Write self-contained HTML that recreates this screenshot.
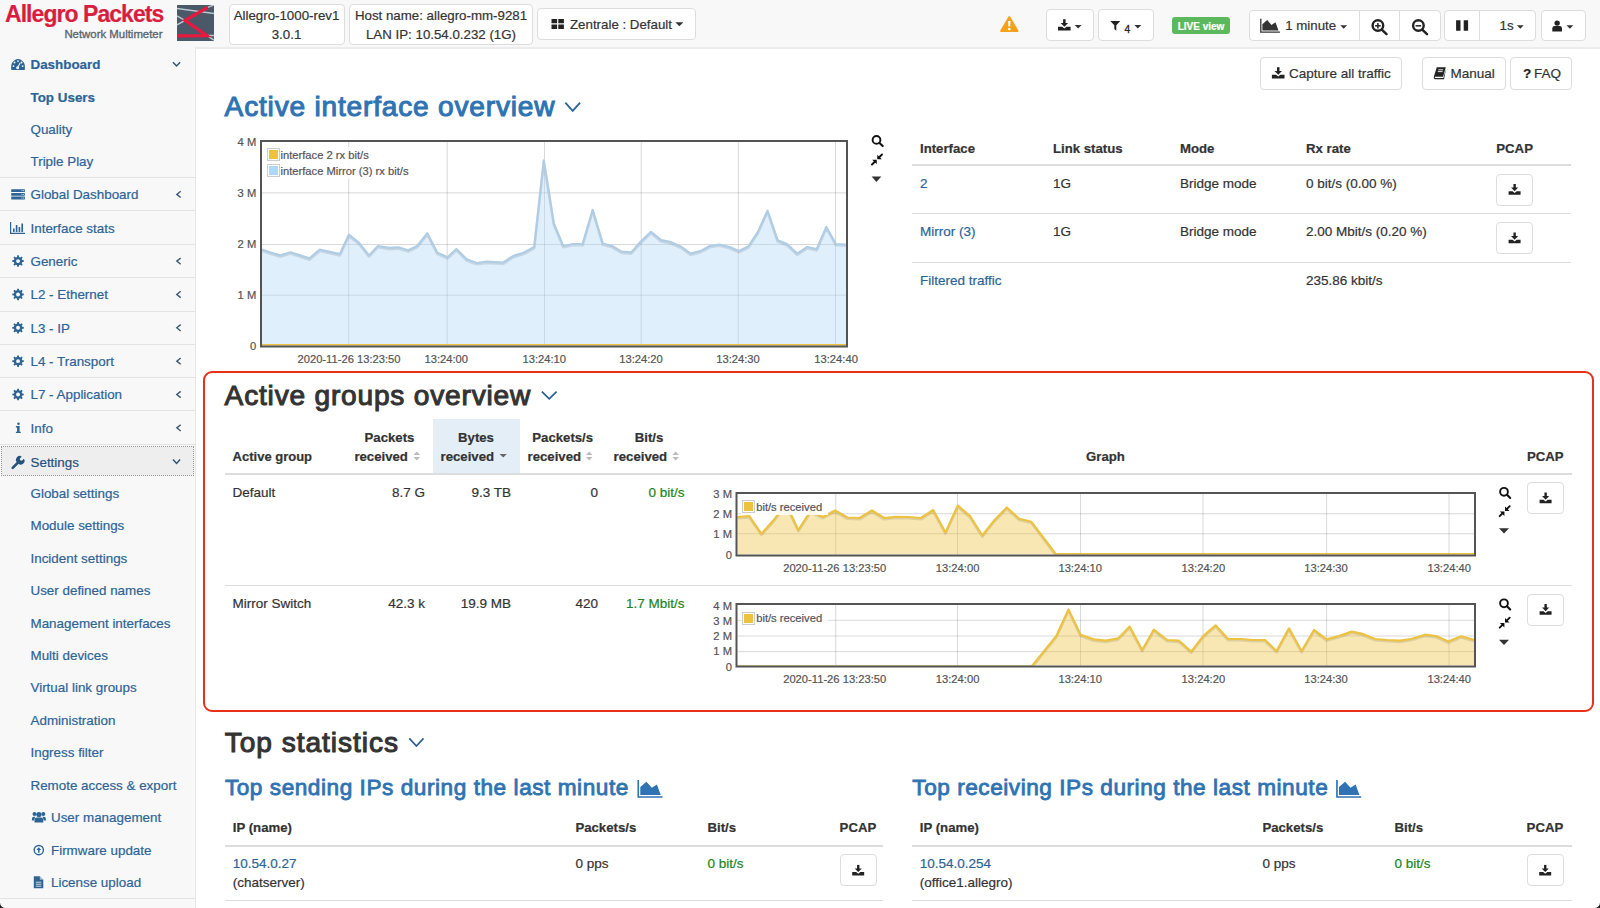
<!DOCTYPE html>
<html><head><meta charset="utf-8"><style>
html,body{margin:0;padding:0;}
body{width:1600px;height:908px;overflow:hidden;position:relative;font-family:"Liberation Sans",sans-serif;color:#333;background:#fff;}
.t{position:absolute;white-space:nowrap;-webkit-text-stroke:0.2px currentColor;}
</style></head><body>
<div style="position:absolute;left:0px;top:0px;width:1600px;height:908px;background:#f8f8f8"></div>
<div style="position:absolute;left:196px;top:47px;width:1404px;height:861px;background:#fff;border-top:2px solid #ececec;box-sizing:border-box"></div>
<div class="t" style="top:3.00px;font-size:23px;line-height:23px;font-weight:bold;color:#d81e3f;left:5.00px;letter-spacing:-0.95px;">Allegro Packets</div>
<div class="t" style="top:29.20px;font-size:11.4px;line-height:11.4px;color:#5d6670;left:64.40px;-webkit-text-stroke:0.35px #5d6670;">Network Multimeter</div>
<svg style="position:absolute;left:177.4px;top:4.8px" width="37" height="36.7" viewBox="0 0 37 36.7"><rect width="37" height="36.7" fill="#4a5868"/><path d="M0 3.4 L36.9 8.6 M30.7 2.4 L36.9 0 M0 10.9 L8 15.4 L0 19.9 M29.8 30.4 L36.9 30.4 M29.8 30.4 L36.9 35.1" stroke="#b9c5cd" stroke-width="1.5" fill="none"/><path d="M30.7 2.4 L8 15.4 L29.8 30.6 L0 30.8" stroke="#e8183f" stroke-width="3.2" fill="none" stroke-linejoin="miter"/></svg>
<div style="position:absolute;left:229px;top:3.5px;width:116px;height:41px;background:#fff;border:1px solid #ddd;border-radius:4px;box-sizing:border-box;"></div>
<div class="t" style="top:9.00px;font-size:13.3px;line-height:13.3px;left:-113.50px;width:800px;text-align:center;">Allegro-1000-rev1</div>
<div class="t" style="top:27.50px;font-size:13.3px;line-height:13.3px;left:-113.50px;width:800px;text-align:center;">3.0.1</div>
<div style="position:absolute;left:349px;top:3.5px;width:184px;height:41px;background:#fff;border:1px solid #ddd;border-radius:4px;box-sizing:border-box;"></div>
<div class="t" style="top:9.00px;font-size:13.3px;line-height:13.3px;left:41.00px;width:800px;text-align:center;">Host name: allegro-mm-9281</div>
<div class="t" style="top:27.50px;font-size:13.3px;line-height:13.3px;left:41.00px;width:800px;text-align:center;">LAN IP: 10.54.0.232 (1G)</div>
<div style="position:absolute;left:537px;top:8px;width:159px;height:32px;background:#fff;border:1px solid #ddd;border-radius:4px;box-sizing:border-box;"></div>
<div class="t" style="top:17.90px;font-size:13.3px;line-height:13.3px;left:570.00px;">Zentrale : Default</div>
<div style="position:absolute;left:1046px;top:9px;width:48px;height:32px;background:#fff;border:1px solid #ddd;border-radius:4px;box-sizing:border-box;"></div>
<div style="position:absolute;left:1098px;top:9px;width:56px;height:32px;background:#fff;border:1px solid #ddd;border-radius:4px;box-sizing:border-box;"></div>
<div style="position:absolute;left:1172px;top:17px;width:58px;height:17px;background:#5cb85c;border-radius:3px"></div>
<div class="t" style="top:21.50px;font-size:10px;line-height:10px;font-weight:bold;color:#fff;left:801.00px;width:800px;text-align:center;">LIVE view</div>
<div style="position:absolute;left:1248.5px;top:9.5px;width:192px;height:31px;background:#fff;border:1px solid #ddd;border-radius:4px;box-sizing:border-box;"></div>
<div style="position:absolute;left:1358.5px;top:9.5px;width:1px;height:31px;background:#ddd"></div>
<div style="position:absolute;left:1399px;top:9.5px;width:1px;height:31px;background:#ddd"></div>
<div class="t" style="top:19.40px;font-size:13.3px;line-height:13.3px;left:1285.20px;">1 minute</div>
<div style="position:absolute;left:1444px;top:9.5px;width:92px;height:31px;background:#fff;border:1px solid #ddd;border-radius:4px;box-sizing:border-box;"></div>
<div style="position:absolute;left:1479px;top:9.5px;width:1px;height:31px;background:#ddd"></div>
<div class="t" style="top:19.20px;font-size:13.3px;line-height:13.3px;left:1499.50px;">1s</div>
<div style="position:absolute;left:1540.5px;top:9.5px;width:45px;height:31px;background:#fff;border:1px solid #ddd;border-radius:4px;box-sizing:border-box;"></div>
<div style="position:absolute;left:1260px;top:57px;width:142px;height:33px;background:#fff;border:1px solid #ddd;border-radius:4px;box-sizing:border-box;"></div>
<div class="t" style="top:67.40px;font-size:13.5px;line-height:13.5px;left:1289.00px;">Capture all traffic</div>
<div style="position:absolute;left:1421.5px;top:57px;width:84px;height:33px;background:#fff;border:1px solid #ddd;border-radius:4px;box-sizing:border-box;"></div>
<div class="t" style="top:67.40px;font-size:13.5px;line-height:13.5px;left:1450.50px;">Manual</div>
<div style="position:absolute;left:1509.5px;top:57px;width:62px;height:33px;background:#fff;border:1px solid #ddd;border-radius:4px;box-sizing:border-box;"></div>
<div class="t" style="top:67.40px;font-size:13.5px;line-height:13.5px;left:1534.00px;">FAQ</div>
<div style="position:absolute;left:195px;top:47px;width:1px;height:861px;background:#e7e7e7"></div>
<div class="t" style="top:58.00px;font-size:13.4px;line-height:13.4px;font-weight:bold;color:#2c6496;left:30.50px;">Dashboard</div>
<div class="t" style="top:90.70px;font-size:13.4px;line-height:13.4px;font-weight:bold;color:#2c6496;left:30.50px;">Top Users</div>
<div class="t" style="top:123.00px;font-size:13.4px;line-height:13.4px;color:#2c6496;left:30.50px;">Quality</div>
<div class="t" style="top:155.40px;font-size:13.4px;line-height:13.4px;color:#2c6496;left:30.50px;">Triple Play</div>
<div style="position:absolute;left:0px;top:177px;width:195px;height:1px;background:#e3e3e3"></div>
<div class="t" style="top:188.20px;font-size:13.4px;line-height:13.4px;color:#2c6496;left:30.50px;">Global Dashboard</div>
<div style="position:absolute;left:0px;top:210px;width:195px;height:1px;background:#e3e3e3"></div>
<div class="t" style="top:221.55px;font-size:13.4px;line-height:13.4px;color:#2c6496;left:30.50px;">Interface stats</div>
<div style="position:absolute;left:0px;top:244px;width:195px;height:1px;background:#e3e3e3"></div>
<div class="t" style="top:254.90px;font-size:13.4px;line-height:13.4px;color:#2c6496;left:30.50px;">Generic</div>
<div style="position:absolute;left:0px;top:277px;width:195px;height:1px;background:#e3e3e3"></div>
<div class="t" style="top:288.25px;font-size:13.4px;line-height:13.4px;color:#2c6496;left:30.50px;">L2 - Ethernet</div>
<div style="position:absolute;left:0px;top:311px;width:195px;height:1px;background:#e3e3e3"></div>
<div class="t" style="top:321.60px;font-size:13.4px;line-height:13.4px;color:#2c6496;left:30.50px;">L3 - IP</div>
<div style="position:absolute;left:0px;top:344px;width:195px;height:1px;background:#e3e3e3"></div>
<div class="t" style="top:354.95px;font-size:13.4px;line-height:13.4px;color:#2c6496;left:30.50px;">L4 - Transport</div>
<div style="position:absolute;left:0px;top:377px;width:195px;height:1px;background:#e3e3e3"></div>
<div class="t" style="top:388.30px;font-size:13.4px;line-height:13.4px;color:#2c6496;left:30.50px;">L7 - Application</div>
<div style="position:absolute;left:0px;top:410px;width:195px;height:1px;background:#e3e3e3"></div>
<div class="t" style="top:421.65px;font-size:13.4px;line-height:13.4px;color:#2c6496;left:30.50px;">Info</div>
<div style="position:absolute;left:0px;top:444px;width:195px;height:1px;background:#e3e3e3"></div>
<div style="position:absolute;left:1px;top:446px;width:193px;height:30px;background:#eeeeee;border:1px dotted #999;box-sizing:border-box"></div>
<div class="t" style="top:455.80px;font-size:13.4px;line-height:13.4px;color:#23527c;left:30.50px;">Settings</div>
<div class="t" style="top:487.00px;font-size:13.4px;line-height:13.4px;color:#2c6496;left:30.50px;">Global settings</div>
<div class="t" style="top:519.40px;font-size:13.4px;line-height:13.4px;color:#2c6496;left:30.50px;">Module settings</div>
<div class="t" style="top:551.80px;font-size:13.4px;line-height:13.4px;color:#2c6496;left:30.50px;">Incident settings</div>
<div class="t" style="top:584.20px;font-size:13.4px;line-height:13.4px;color:#2c6496;left:30.50px;">User defined names</div>
<div class="t" style="top:616.60px;font-size:13.4px;line-height:13.4px;color:#2c6496;left:30.50px;">Management interfaces</div>
<div class="t" style="top:649.00px;font-size:13.4px;line-height:13.4px;color:#2c6496;left:30.50px;">Multi devices</div>
<div class="t" style="top:681.40px;font-size:13.4px;line-height:13.4px;color:#2c6496;left:30.50px;">Virtual link groups</div>
<div class="t" style="top:713.80px;font-size:13.4px;line-height:13.4px;color:#2c6496;left:30.50px;">Administration</div>
<div class="t" style="top:746.20px;font-size:13.4px;line-height:13.4px;color:#2c6496;left:30.50px;">Ingress filter</div>
<div class="t" style="top:778.60px;font-size:13.4px;line-height:13.4px;color:#2c6496;left:30.50px;">Remote access &amp; export</div>
<div class="t" style="top:811.00px;font-size:13.4px;line-height:13.4px;color:#2c6496;left:51.00px;">User management</div>
<div class="t" style="top:843.50px;font-size:13.4px;line-height:13.4px;color:#2c6496;left:51.00px;">Firmware update</div>
<div class="t" style="top:876.00px;font-size:13.4px;line-height:13.4px;color:#2c6496;left:51.00px;">License upload</div>
<div style="position:absolute;left:0px;top:898px;width:195px;height:1px;background:#e3e3e3"></div>
<div class="t" style="top:92.60px;font-size:28.1px;line-height:28.1px;color:#2f73b3;left:224.60px;letter-spacing:0.8px;-webkit-text-stroke:1.05px #2f73b3;">Active interface overview</div>
<div class="t" style="top:141.80px;font-size:13.2px;line-height:13.2px;font-weight:bold;left:920.00px;">Interface</div>
<div class="t" style="top:141.80px;font-size:13.2px;line-height:13.2px;font-weight:bold;left:1053.00px;">Link status</div>
<div class="t" style="top:141.80px;font-size:13.2px;line-height:13.2px;font-weight:bold;left:1180.00px;">Mode</div>
<div class="t" style="top:141.80px;font-size:13.2px;line-height:13.2px;font-weight:bold;left:1306.00px;">Rx rate</div>
<div class="t" style="top:141.80px;font-size:13.2px;line-height:13.2px;font-weight:bold;left:1496.30px;">PCAP</div>
<div style="position:absolute;left:912px;top:164px;width:659px;height:2px;background:#ddd"></div>
<div style="position:absolute;left:912px;top:213px;width:659px;height:1px;background:#ddd"></div>
<div style="position:absolute;left:912px;top:262px;width:659px;height:1px;background:#ddd"></div>
<div class="t" style="top:176.80px;font-size:13.5px;line-height:13.5px;color:#2c6496;left:920.00px;">2</div>
<div class="t" style="top:176.80px;font-size:13.5px;line-height:13.5px;left:1053.00px;">1G</div>
<div class="t" style="top:176.80px;font-size:13.5px;line-height:13.5px;left:1180.00px;">Bridge mode</div>
<div class="t" style="top:176.80px;font-size:13.5px;line-height:13.5px;left:1306.00px;">0 bit/s (0.00 %)</div>
<div style="position:absolute;left:1496px;top:173.5px;width:37px;height:32px;background:#fff;border:1px solid #ddd;border-radius:4px;box-sizing:border-box;"></div>
<div class="t" style="top:225.40px;font-size:13.5px;line-height:13.5px;color:#2c6496;left:920.00px;">Mirror (3)</div>
<div class="t" style="top:225.40px;font-size:13.5px;line-height:13.5px;left:1053.00px;">1G</div>
<div class="t" style="top:225.40px;font-size:13.5px;line-height:13.5px;left:1180.00px;">Bridge mode</div>
<div class="t" style="top:225.40px;font-size:13.5px;line-height:13.5px;left:1306.00px;">2.00 Mbit/s (0.20 %)</div>
<div style="position:absolute;left:1496px;top:222px;width:37px;height:32px;background:#fff;border:1px solid #ddd;border-radius:4px;box-sizing:border-box;"></div>
<div class="t" style="top:274.00px;font-size:13.5px;line-height:13.5px;color:#2c6496;left:920.00px;">Filtered traffic</div>
<div class="t" style="top:274.00px;font-size:13.5px;line-height:13.5px;left:1306.00px;">235.86 kbit/s</div>
<div style="position:absolute;left:202.8px;top:370.7px;width:1391px;height:341px;border:2.4px solid #e8301a;border-radius:9px;box-sizing:border-box"></div>
<div class="t" style="top:381.60px;font-size:28.1px;line-height:28.1px;left:224.60px;letter-spacing:0.8px;-webkit-text-stroke:1.05px #333;">Active groups overview</div>
<div style="position:absolute;left:433px;top:419px;width:86.5px;height:54px;background:#e4eef7"></div>
<div class="t" style="top:450.00px;font-size:13.0px;line-height:13.0px;font-weight:bold;left:232.60px;">Active group</div>
<div class="t" style="top:430.50px;font-size:13.2px;line-height:13.2px;font-weight:bold;left:-10.50px;width:800px;text-align:center;">Packets</div>
<div class="t" style="top:430.50px;font-size:13.2px;line-height:13.2px;font-weight:bold;left:76.00px;width:800px;text-align:center;">Bytes</div>
<div class="t" style="top:430.50px;font-size:13.2px;line-height:13.2px;font-weight:bold;left:162.70px;width:800px;text-align:center;">Packets/s</div>
<div class="t" style="top:430.50px;font-size:13.2px;line-height:13.2px;font-weight:bold;left:249.00px;width:800px;text-align:center;">Bit/s</div>
<div class="t" style="top:450.00px;font-size:13.2px;line-height:13.2px;font-weight:bold;left:354.40px;">received</div>
<div class="t" style="top:450.00px;font-size:13.2px;line-height:13.2px;font-weight:bold;left:440.50px;">received</div>
<div class="t" style="top:450.00px;font-size:13.2px;line-height:13.2px;font-weight:bold;left:527.50px;">received</div>
<div class="t" style="top:450.00px;font-size:13.2px;line-height:13.2px;font-weight:bold;left:613.60px;">received</div>
<div class="t" style="top:449.50px;font-size:13.2px;line-height:13.2px;font-weight:bold;left:705.50px;width:800px;text-align:center;">Graph</div>
<div class="t" style="top:449.50px;font-size:13.2px;line-height:13.2px;font-weight:bold;left:1527.00px;">PCAP</div>
<div style="position:absolute;left:225px;top:472.5px;width:1347px;height:2px;background:#ddd"></div>
<div style="position:absolute;left:225px;top:584.5px;width:1347px;height:1px;background:#ddd"></div>
<div class="t" style="top:486.00px;font-size:13.5px;line-height:13.5px;left:232.60px;">Default</div>
<div class="t" style="top:486.00px;font-size:13.5px;line-height:13.5px;right:1175.00px;">8.7 G</div>
<div class="t" style="top:486.00px;font-size:13.5px;line-height:13.5px;right:1089.00px;">9.3 TB</div>
<div class="t" style="top:486.00px;font-size:13.5px;line-height:13.5px;right:1002.00px;">0</div>
<div class="t" style="top:486.00px;font-size:13.5px;line-height:13.5px;color:#1a8520;right:915.60px;">0 bit/s</div>
<div class="t" style="top:597.00px;font-size:13.5px;line-height:13.5px;left:232.60px;">Mirror Switch</div>
<div class="t" style="top:597.00px;font-size:13.5px;line-height:13.5px;right:1175.00px;">42.3 k</div>
<div class="t" style="top:597.00px;font-size:13.5px;line-height:13.5px;right:1089.00px;">19.9 MB</div>
<div class="t" style="top:597.00px;font-size:13.5px;line-height:13.5px;right:1002.00px;">420</div>
<div class="t" style="top:597.00px;font-size:13.5px;line-height:13.5px;color:#1a8520;right:915.60px;">1.7 Mbit/s</div>
<div style="position:absolute;left:1527px;top:482px;width:37px;height:32px;background:#fff;border:1px solid #ddd;border-radius:4px;box-sizing:border-box;"></div>
<div style="position:absolute;left:1527px;top:593.5px;width:37px;height:32px;background:#fff;border:1px solid #ddd;border-radius:4px;box-sizing:border-box;"></div>
<div class="t" style="top:728.60px;font-size:28.1px;line-height:28.1px;left:224.80px;letter-spacing:0.95px;-webkit-text-stroke:1.05px #333;">Top statistics</div>
<div class="t" style="top:777.30px;font-size:22.6px;line-height:22.6px;color:#2f73b3;left:224.90px;letter-spacing:0.55px;-webkit-text-stroke:0.85px #2f73b3;">Top sending IPs during the last minute</div>
<div class="t" style="top:777.30px;font-size:22.6px;line-height:22.6px;color:#2f73b3;left:912.30px;letter-spacing:0.54px;-webkit-text-stroke:0.85px #2f73b3;">Top receiving IPs during the last minute</div>
<div class="t" style="top:820.60px;font-size:13.2px;line-height:13.2px;font-weight:bold;left:232.80px;">IP (name)</div>
<div class="t" style="top:820.60px;font-size:13.2px;line-height:13.2px;font-weight:bold;left:575.40px;">Packets/s</div>
<div class="t" style="top:820.60px;font-size:13.2px;line-height:13.2px;font-weight:bold;left:707.50px;">Bit/s</div>
<div class="t" style="top:820.60px;font-size:13.2px;line-height:13.2px;font-weight:bold;left:839.60px;">PCAP</div>
<div style="position:absolute;left:225.4px;top:844.6px;width:658.0px;height:2px;background:#ddd"></div>
<div style="position:absolute;left:225.4px;top:899.8px;width:658.0px;height:1px;background:#ddd"></div>
<div class="t" style="top:857.40px;font-size:13.5px;line-height:13.5px;left:575.40px;">0 pps</div>
<div class="t" style="top:857.40px;font-size:13.5px;line-height:13.5px;color:#1a8520;left:707.50px;">0 bit/s</div>
<div style="position:absolute;left:839.6px;top:854.4px;width:37px;height:32px;background:#fff;border:1px solid #ddd;border-radius:4px;box-sizing:border-box;"></div>
<div class="t" style="top:820.60px;font-size:13.2px;line-height:13.2px;font-weight:bold;left:919.80px;">IP (name)</div>
<div class="t" style="top:820.60px;font-size:13.2px;line-height:13.2px;font-weight:bold;left:1262.40px;">Packets/s</div>
<div class="t" style="top:820.60px;font-size:13.2px;line-height:13.2px;font-weight:bold;left:1394.50px;">Bit/s</div>
<div class="t" style="top:820.60px;font-size:13.2px;line-height:13.2px;font-weight:bold;left:1526.60px;">PCAP</div>
<div style="position:absolute;left:912.3px;top:844.6px;width:659.3px;height:2px;background:#ddd"></div>
<div style="position:absolute;left:912.3px;top:899.8px;width:659.3px;height:1px;background:#ddd"></div>
<div class="t" style="top:857.40px;font-size:13.5px;line-height:13.5px;left:1262.40px;">0 pps</div>
<div class="t" style="top:857.40px;font-size:13.5px;line-height:13.5px;color:#1a8520;left:1394.50px;">0 bit/s</div>
<div style="position:absolute;left:1526.6px;top:854.4px;width:37px;height:32px;background:#fff;border:1px solid #ddd;border-radius:4px;box-sizing:border-box;"></div>
<div class="t" style="top:857.40px;font-size:13.5px;line-height:13.5px;color:#2c6496;left:232.80px;">10.54.0.27</div>
<div class="t" style="top:876.20px;font-size:13.5px;line-height:13.5px;left:232.80px;">(chatserver)</div>
<div class="t" style="top:857.40px;font-size:13.5px;line-height:13.5px;color:#2c6496;left:919.80px;">10.54.0.254</div>
<div class="t" style="top:876.20px;font-size:13.5px;line-height:13.5px;left:919.80px;">(office1.allegro)</div>
<svg style="position:absolute;left:0;top:0" width="1600" height="908" viewBox="0 0 1600 908"><defs><clipPath id="c260_140"><rect x="262" y="142" width="584" height="203.5"/></clipPath></defs><path d="M348.7 142V345.5M447.2 142V345.5M544.5 142V345.5M641.2 142V345.5M738.3 142V345.5M835.5 142V345.5M262 192.9H846M262 244.5H846M262 295.2H846" stroke="rgba(84,84,84,0.22)" stroke-width="1" fill="none"/><g clip-path="url(#c260_140)"><polygon points="262.0,345.5 262.0,249.6 270.5,252.5 280.4,255.4 290.5,252.3 300.0,255.4 309.5,258.4 319.7,249.6 329.8,251.9 339.9,254.1 348.8,234.6 358.9,242.7 369.0,255.4 377.9,246.0 389.3,247.8 398.2,247.3 408.3,250.3 417.2,246.0 427.3,233.3 437.4,252.8 447.6,257.2 456.4,249.0 466.6,259.2 476.7,263.0 486.8,261.7 495.0,262.1 503.3,262.5 513.4,255.9 523.6,252.8 534.2,247.0 543.8,160.4 553.9,223.7 563.3,246.0 572.9,244.0 582.6,244.0 592.7,209.8 602.8,243.5 612.2,246.0 621.6,251.6 631.2,252.4 640.8,241.5 651.0,231.9 661.1,240.2 671.2,242.2 680.6,246.5 690.7,253.6 700.9,250.9 709.8,246.0 719.4,244.5 729.5,247.0 738.9,251.1 748.3,246.5 757.9,231.9 767.5,210.6 777.6,240.2 787.0,244.0 797.2,253.6 807.3,247.0 816.7,249.1 826.3,227.0 835.9,244.0 846.0,244.5 846.0,345.5" fill="rgba(175,216,248,0.4)"/><polyline points="262.0,250.9 270.5,253.8 280.4,256.7 290.5,253.6 300.0,256.7 309.5,259.7 319.7,250.9 329.8,253.2 339.9,255.4 348.8,235.9 358.9,244.0 369.0,256.7 377.9,247.3 389.3,249.1 398.2,248.6 408.3,251.6 417.2,247.3 427.3,234.6 437.4,254.1 447.6,258.5 456.4,250.3 466.6,260.5 476.7,264.3 486.8,263.0 495.0,263.4 503.3,263.8 513.4,257.2 523.6,254.1 534.2,248.3 543.8,161.7 553.9,225.0 563.3,247.3 572.9,245.3 582.6,245.3 592.7,211.1 602.8,244.8 612.2,247.3 621.6,252.9 631.2,253.7 640.8,242.8 651.0,233.2 661.1,241.5 671.2,243.5 680.6,247.8 690.7,254.9 700.9,252.2 709.8,247.3 719.4,245.8 729.5,248.3 738.9,252.4 748.3,247.8 757.9,233.2 767.5,211.9 777.6,241.5 787.0,245.3 797.2,254.9 807.3,248.3 816.7,250.4 826.3,228.3 835.9,245.3 846.0,245.8" fill="none" stroke="rgba(0,0,0,0.1)" stroke-width="2.6" stroke-linejoin="round"/><polyline points="262.0,249.6 270.5,252.5 280.4,255.4 290.5,252.3 300.0,255.4 309.5,258.4 319.7,249.6 329.8,251.9 339.9,254.1 348.8,234.6 358.9,242.7 369.0,255.4 377.9,246.0 389.3,247.8 398.2,247.3 408.3,250.3 417.2,246.0 427.3,233.3 437.4,252.8 447.6,257.2 456.4,249.0 466.6,259.2 476.7,263.0 486.8,261.7 495.0,262.1 503.3,262.5 513.4,255.9 523.6,252.8 534.2,247.0 543.8,160.4 553.9,223.7 563.3,246.0 572.9,244.0 582.6,244.0 592.7,209.8 602.8,243.5 612.2,246.0 621.6,251.6 631.2,252.4 640.8,241.5 651.0,231.9 661.1,240.2 671.2,242.2 680.6,246.5 690.7,253.6 700.9,250.9 709.8,246.0 719.4,244.5 729.5,247.0 738.9,251.1 748.3,246.5 757.9,231.9 767.5,210.6 777.6,240.2 787.0,244.0 797.2,253.6 807.3,247.0 816.7,249.1 826.3,227.0 835.9,244.0 846.0,244.5" fill="none" stroke="#b0cde6" stroke-width="2.2" stroke-linejoin="round"/><polyline points="262.0,346.3 846.0,346.3" fill="none" stroke="rgba(0,0,0,0.1)" stroke-width="2.6" stroke-linejoin="round"/><polyline points="262.0,345.0 846.0,345.0" fill="none" stroke="#edc240" stroke-width="2.2" stroke-linejoin="round"/></g><rect x="261" y="141" width="586" height="205.5" fill="none" stroke="#545454" stroke-width="2"/></svg>
<div style="position:absolute;left:265.2px;top:146.7px;width:162.45px;height:32.4px;background:rgba(255,255,255,0.85)"></div>
<div style="position:absolute;left:266.7px;top:148.2px;width:11px;height:11px;border:1px solid #ccc;padding:0"><div style="margin:1px;width:9px;height:9px;background:#edc240"></div></div>
<div class="t" style="top:150.00px;font-size:11.2px;line-height:11.2px;color:#545454;left:280.50px;">interface 2 rx bit/s</div>
<div style="position:absolute;left:266.7px;top:164.4px;width:11px;height:11px;border:1px solid #ccc;padding:0"><div style="margin:1px;width:9px;height:9px;background:#afd8f8"></div></div>
<div class="t" style="top:166.20px;font-size:11.2px;line-height:11.2px;color:#545454;left:280.50px;">interface Mirror (3) rx bit/s</div>
<div class="t" style="top:137.30px;font-size:11.2px;line-height:11.2px;color:#545454;right:1343.80px;">4 M</div>
<div class="t" style="top:187.60px;font-size:11.2px;line-height:11.2px;color:#545454;right:1343.80px;">3 M</div>
<div class="t" style="top:239.20px;font-size:11.2px;line-height:11.2px;color:#545454;right:1343.80px;">2 M</div>
<div class="t" style="top:289.90px;font-size:11.2px;line-height:11.2px;color:#545454;right:1343.80px;">1 M</div>
<div class="t" style="top:340.70px;font-size:11.2px;line-height:11.2px;color:#545454;right:1343.80px;">0</div>
<div class="t" style="top:354.45px;font-size:11.2px;line-height:11.2px;color:#545454;left:-51.00px;width:800px;text-align:center;">2020-11-26 13:23:50</div>
<div class="t" style="top:354.45px;font-size:11.2px;line-height:11.2px;color:#545454;left:46.30px;width:800px;text-align:center;">13:24:00</div>
<div class="t" style="top:354.45px;font-size:11.2px;line-height:11.2px;color:#545454;left:144.30px;width:800px;text-align:center;">13:24:10</div>
<div class="t" style="top:354.45px;font-size:11.2px;line-height:11.2px;color:#545454;left:241.00px;width:800px;text-align:center;">13:24:20</div>
<div class="t" style="top:354.45px;font-size:11.2px;line-height:11.2px;color:#545454;left:338.00px;width:800px;text-align:center;">13:24:30</div>
<div class="t" style="top:354.45px;font-size:11.2px;line-height:11.2px;color:#545454;left:436.10px;width:800px;text-align:center;">13:24:40</div>
<svg style="position:absolute;left:0;top:0" width="1600" height="908" viewBox="0 0 1600 908"><defs><clipPath id="c735_492"><rect x="737.5" y="494" width="736.5" height="60.5"/></clipPath></defs><path d="M835.75 494V554.5M957.5 494V554.5M1080.5 494V554.5M1203 494V554.5M1326.6 494V554.5M1449 494V554.5M737.5 513.75H1474M737.5 533.75H1474" stroke="rgba(84,84,84,0.22)" stroke-width="1" fill="none"/><g clip-path="url(#c735_492)"><polygon points="737.0,554.5 737.0,517.0 749.3,516.2 761.5,533.8 773.8,520.0 786.0,504.0 798.3,530.0 810.6,511.2 822.8,517.0 835.1,510.5 847.4,517.5 859.6,518.0 871.9,510.5 884.2,518.0 896.4,516.8 908.7,517.0 921.0,518.0 933.2,510.0 945.5,532.5 957.8,505.5 970.0,516.2 982.3,535.5 994.6,520.0 1006.8,507.5 1019.1,518.8 1031.4,521.8 1043.6,538.0 1055.9,554.2 1474.0,554.2 1474.0,554.5" fill="rgba(237,194,64,0.4)"/><polyline points="737.0,518.3 749.3,517.5 761.5,535.0 773.8,521.3 786.0,505.3 798.3,531.3 810.6,512.5 822.8,518.3 835.1,511.8 847.4,518.8 859.6,519.3 871.9,511.8 884.2,519.3 896.4,518.0 908.7,518.3 921.0,519.3 933.2,511.3 945.5,533.8 957.8,506.8 970.0,517.5 982.3,536.8 994.6,521.3 1006.8,508.8 1019.1,520.0 1031.4,523.0 1043.6,539.3 1055.9,555.5 1474.0,555.5" fill="none" stroke="rgba(0,0,0,0.1)" stroke-width="2.6" stroke-linejoin="round"/><polyline points="737.0,517.0 749.3,516.2 761.5,533.8 773.8,520.0 786.0,504.0 798.3,530.0 810.6,511.2 822.8,517.0 835.1,510.5 847.4,517.5 859.6,518.0 871.9,510.5 884.2,518.0 896.4,516.8 908.7,517.0 921.0,518.0 933.2,510.0 945.5,532.5 957.8,505.5 970.0,516.2 982.3,535.5 994.6,520.0 1006.8,507.5 1019.1,518.8 1031.4,521.8 1043.6,538.0 1055.9,554.2 1474.0,554.2" fill="none" stroke="#edc240" stroke-width="2.2" stroke-linejoin="round"/></g><rect x="736.5" y="493" width="738.5" height="62.5" fill="none" stroke="#545454" stroke-width="2"/></svg>
<div style="position:absolute;left:740.9px;top:498.9px;width:86.7px;height:16.2px;background:rgba(255,255,255,0.85)"></div>
<div style="position:absolute;left:742.4px;top:500.4px;width:11px;height:11px;border:1px solid #ccc;padding:0"><div style="margin:1px;width:9px;height:9px;background:#edc240"></div></div>
<div class="t" style="top:502.20px;font-size:11.2px;line-height:11.2px;color:#545454;left:756.20px;">bit/s received</div>
<div class="t" style="top:489.20px;font-size:11.2px;line-height:11.2px;color:#545454;right:868.00px;">3 M</div>
<div class="t" style="top:509.30px;font-size:11.2px;line-height:11.2px;color:#545454;right:868.00px;">2 M</div>
<div class="t" style="top:528.90px;font-size:11.2px;line-height:11.2px;color:#545454;right:868.00px;">1 M</div>
<div class="t" style="top:549.80px;font-size:11.2px;line-height:11.2px;color:#545454;right:868.00px;">0</div>
<div class="t" style="top:562.95px;font-size:11.2px;line-height:11.2px;color:#545454;left:434.70px;width:800px;text-align:center;">2020-11-26 13:23:50</div>
<div class="t" style="top:562.95px;font-size:11.2px;line-height:11.2px;color:#545454;left:557.60px;width:800px;text-align:center;">13:24:00</div>
<div class="t" style="top:562.95px;font-size:11.2px;line-height:11.2px;color:#545454;left:680.20px;width:800px;text-align:center;">13:24:10</div>
<div class="t" style="top:562.95px;font-size:11.2px;line-height:11.2px;color:#545454;left:803.40px;width:800px;text-align:center;">13:24:20</div>
<div class="t" style="top:562.95px;font-size:11.2px;line-height:11.2px;color:#545454;left:926.00px;width:800px;text-align:center;">13:24:30</div>
<div class="t" style="top:562.95px;font-size:11.2px;line-height:11.2px;color:#545454;left:1049.20px;width:800px;text-align:center;">13:24:40</div>
<svg style="position:absolute;left:0;top:0" width="1600" height="908" viewBox="0 0 1600 908"><defs><clipPath id="c735_603"><rect x="737.5" y="605" width="736.5" height="60.5"/></clipPath></defs><path d="M835.75 605V665.5M957.5 605V665.5M1080.5 605V665.5M1203 605V665.5M1326.6 605V665.5M1449 605V665.5M737.5 620.3H1474M737.5 636H1474M737.5 651.6H1474" stroke="rgba(84,84,84,0.22)" stroke-width="1" fill="none"/><g clip-path="url(#c735_603)"><polygon points="737.0,665.5 737.0,666.0 1032.0,666.0 1056.2,636.2 1068.5,609.5 1080.6,634.7 1093.8,639.4 1106.2,640.6 1118.1,638.4 1129.7,626.6 1142.2,650.0 1153.8,629.7 1167.2,640.0 1178.8,640.6 1191.2,651.6 1203.1,636.2 1215.6,625.3 1228.1,639.0 1240.6,639.0 1252.5,640.0 1265.0,640.0 1276.6,651.0 1289.0,628.4 1301.6,651.0 1314.0,630.0 1326.6,639.4 1339.0,636.0 1351.6,631.6 1362.5,633.8 1375.0,639.0 1387.5,640.0 1400.0,640.6 1411.0,639.0 1425.0,634.7 1436.0,636.0 1448.4,641.6 1461.0,636.2 1474.4,640.0 1474.4,665.5" fill="rgba(237,194,64,0.4)"/><polyline points="737.0,667.3 1032.0,667.3 1056.2,637.5 1068.5,610.8 1080.6,636.0 1093.8,640.7 1106.2,641.9 1118.1,639.7 1129.7,627.9 1142.2,651.3 1153.8,631.0 1167.2,641.3 1178.8,641.9 1191.2,652.9 1203.1,637.5 1215.6,626.6 1228.1,640.3 1240.6,640.3 1252.5,641.3 1265.0,641.3 1276.6,652.3 1289.0,629.7 1301.6,652.3 1314.0,631.3 1326.6,640.7 1339.0,637.3 1351.6,632.9 1362.5,635.0 1375.0,640.3 1387.5,641.3 1400.0,641.9 1411.0,640.3 1425.0,636.0 1436.0,637.3 1448.4,642.9 1461.0,637.5 1474.4,641.3" fill="none" stroke="rgba(0,0,0,0.1)" stroke-width="2.6" stroke-linejoin="round"/><polyline points="737.0,666.0 1032.0,666.0 1056.2,636.2 1068.5,609.5 1080.6,634.7 1093.8,639.4 1106.2,640.6 1118.1,638.4 1129.7,626.6 1142.2,650.0 1153.8,629.7 1167.2,640.0 1178.8,640.6 1191.2,651.6 1203.1,636.2 1215.6,625.3 1228.1,639.0 1240.6,639.0 1252.5,640.0 1265.0,640.0 1276.6,651.0 1289.0,628.4 1301.6,651.0 1314.0,630.0 1326.6,639.4 1339.0,636.0 1351.6,631.6 1362.5,633.8 1375.0,639.0 1387.5,640.0 1400.0,640.6 1411.0,639.0 1425.0,634.7 1436.0,636.0 1448.4,641.6 1461.0,636.2 1474.4,640.0" fill="none" stroke="#edc240" stroke-width="2.2" stroke-linejoin="round"/></g><rect x="736.5" y="604" width="738.5" height="62.5" fill="none" stroke="#545454" stroke-width="2"/></svg>
<div style="position:absolute;left:740.9px;top:610.1px;width:86.7px;height:16.2px;background:rgba(255,255,255,0.85)"></div>
<div style="position:absolute;left:742.4px;top:611.6px;width:11px;height:11px;border:1px solid #ccc;padding:0"><div style="margin:1px;width:9px;height:9px;background:#edc240"></div></div>
<div class="t" style="top:613.40px;font-size:11.2px;line-height:11.2px;color:#545454;left:756.20px;">bit/s received</div>
<div class="t" style="top:600.90px;font-size:11.2px;line-height:11.2px;color:#545454;right:868.00px;">4 M</div>
<div class="t" style="top:615.90px;font-size:11.2px;line-height:11.2px;color:#545454;right:868.00px;">3 M</div>
<div class="t" style="top:630.90px;font-size:11.2px;line-height:11.2px;color:#545454;right:868.00px;">2 M</div>
<div class="t" style="top:645.90px;font-size:11.2px;line-height:11.2px;color:#545454;right:868.00px;">1 M</div>
<div class="t" style="top:661.60px;font-size:11.2px;line-height:11.2px;color:#545454;right:868.00px;">0</div>
<div class="t" style="top:674.15px;font-size:11.2px;line-height:11.2px;color:#545454;left:434.70px;width:800px;text-align:center;">2020-11-26 13:23:50</div>
<div class="t" style="top:674.15px;font-size:11.2px;line-height:11.2px;color:#545454;left:557.60px;width:800px;text-align:center;">13:24:00</div>
<div class="t" style="top:674.15px;font-size:11.2px;line-height:11.2px;color:#545454;left:680.20px;width:800px;text-align:center;">13:24:10</div>
<div class="t" style="top:674.15px;font-size:11.2px;line-height:11.2px;color:#545454;left:803.40px;width:800px;text-align:center;">13:24:20</div>
<div class="t" style="top:674.15px;font-size:11.2px;line-height:11.2px;color:#545454;left:926.00px;width:800px;text-align:center;">13:24:30</div>
<div class="t" style="top:674.15px;font-size:11.2px;line-height:11.2px;color:#545454;left:1049.20px;width:800px;text-align:center;">13:24:40</div>
<svg style="position:absolute;left:0;top:0" width="1600" height="908" viewBox="0 0 1600 908"><path d="M11.3 70.0Q10.5 64.1 13.3 61.300000000000004Q17.05 58.2 18.05 59.1Q19.05 58.2 22.8 61.300000000000004Q25.6 64.1 24.8 70.0Z" fill="#2c6496"/><circle cx="13.5" cy="66.1" r="0.95" fill="#f4f8fc"/><circle cx="14.5" cy="62.5" r="0.95" fill="#f4f8fc"/><circle cx="18.0" cy="61.1" r="0.95" fill="#f4f8fc"/><circle cx="21.6" cy="62.5" r="0.95" fill="#f4f8fc"/><circle cx="22.6" cy="66.1" r="0.95" fill="#f4f8fc"/><path d="M17.650000000000002 67.7L20.25 62.7" stroke="#f4f8fc" stroke-width="1.1"/><circle cx="17.650000000000002" cy="67.7" r="1.5" fill="#f4f8fc"/><path d="M173 62.2L176.55 66.0L180.1 62.2" stroke="#34546f" stroke-width="1.5" fill="none"/><rect x="11.2" y="189.2" width="13.7" height="2.9" rx="0.5" fill="#2c6496"/><rect x="21.5" y="190.2" width="0.9" height="0.9" fill="#f8f8f8"/><rect x="23.2" y="190.2" width="0.9" height="0.9" fill="#f8f8f8"/><rect x="11.2" y="192.89999999999998" width="13.7" height="2.9" rx="0.5" fill="#2c6496"/><rect x="21.5" y="193.89999999999998" width="0.9" height="0.9" fill="#f8f8f8"/><rect x="23.2" y="193.89999999999998" width="0.9" height="0.9" fill="#f8f8f8"/><rect x="11.2" y="196.6" width="13.7" height="2.9" rx="0.5" fill="#2c6496"/><rect x="21.5" y="197.6" width="0.9" height="0.9" fill="#f8f8f8"/><rect x="23.2" y="197.6" width="0.9" height="0.9" fill="#f8f8f8"/><path d="M10.6 222V233.4H25" stroke="#2c6496" stroke-width="1.2" fill="none"/><path d="M13 228.5h1.6v3.6h-1.6Z M15.8 225h1.6v7.1h-1.6Z M18.6 227h1.6v5.1h-1.6Z M21.4 223.5h1.6v8.6h-1.6Z" fill="#2c6496"/><path d="M22.23 260.10 L23.79 260.27 L23.79 261.93 L22.23 262.10 L21.71 263.35 L22.69 264.57 L21.52 265.74 L20.30 264.76 L19.05 265.28 L18.88 266.84 L17.22 266.84 L17.05 265.28 L15.80 264.76 L14.58 265.74 L13.41 264.57 L14.39 263.35 L13.87 262.10 L12.31 261.93 L12.31 260.27 L13.87 260.10 L14.39 258.85 L13.41 257.63 L14.58 256.46 L15.80 257.44 L17.05 256.92 L17.22 255.36 L18.88 255.36 L19.05 256.92 L20.30 257.44 L21.52 256.46 L22.69 257.63 L21.71 258.85ZM20.02 261.10 A1.97 1.97 0 1 0 16.08 261.10 A1.97 1.97 0 1 0 20.02 261.10Z" fill="#2c6496" fill-rule="evenodd"/><path d="M22.23 293.45 L23.79 293.62 L23.79 295.28 L22.23 295.45 L21.71 296.70 L22.69 297.92 L21.52 299.09 L20.30 298.11 L19.05 298.63 L18.88 300.19 L17.22 300.19 L17.05 298.63 L15.80 298.11 L14.58 299.09 L13.41 297.92 L14.39 296.70 L13.87 295.45 L12.31 295.28 L12.31 293.62 L13.87 293.45 L14.39 292.20 L13.41 290.98 L14.58 289.81 L15.80 290.79 L17.05 290.27 L17.22 288.71 L18.88 288.71 L19.05 290.27 L20.30 290.79 L21.52 289.81 L22.69 290.98 L21.71 292.20ZM20.02 294.45 A1.97 1.97 0 1 0 16.08 294.45 A1.97 1.97 0 1 0 20.02 294.45Z" fill="#2c6496" fill-rule="evenodd"/><path d="M22.23 326.80 L23.79 326.97 L23.79 328.63 L22.23 328.80 L21.71 330.05 L22.69 331.27 L21.52 332.44 L20.30 331.46 L19.05 331.98 L18.88 333.54 L17.22 333.54 L17.05 331.98 L15.80 331.46 L14.58 332.44 L13.41 331.27 L14.39 330.05 L13.87 328.80 L12.31 328.63 L12.31 326.97 L13.87 326.80 L14.39 325.55 L13.41 324.33 L14.58 323.16 L15.80 324.14 L17.05 323.62 L17.22 322.06 L18.88 322.06 L19.05 323.62 L20.30 324.14 L21.52 323.16 L22.69 324.33 L21.71 325.55ZM20.02 327.80 A1.97 1.97 0 1 0 16.08 327.80 A1.97 1.97 0 1 0 20.02 327.80Z" fill="#2c6496" fill-rule="evenodd"/><path d="M22.23 360.15 L23.79 360.32 L23.79 361.98 L22.23 362.15 L21.71 363.40 L22.69 364.62 L21.52 365.79 L20.30 364.81 L19.05 365.33 L18.88 366.89 L17.22 366.89 L17.05 365.33 L15.80 364.81 L14.58 365.79 L13.41 364.62 L14.39 363.40 L13.87 362.15 L12.31 361.98 L12.31 360.32 L13.87 360.15 L14.39 358.90 L13.41 357.68 L14.58 356.51 L15.80 357.49 L17.05 356.97 L17.22 355.41 L18.88 355.41 L19.05 356.97 L20.30 357.49 L21.52 356.51 L22.69 357.68 L21.71 358.90ZM20.02 361.15 A1.97 1.97 0 1 0 16.08 361.15 A1.97 1.97 0 1 0 20.02 361.15Z" fill="#2c6496" fill-rule="evenodd"/><path d="M22.23 393.50 L23.79 393.67 L23.79 395.33 L22.23 395.50 L21.71 396.75 L22.69 397.97 L21.52 399.14 L20.30 398.16 L19.05 398.68 L18.88 400.24 L17.22 400.24 L17.05 398.68 L15.80 398.16 L14.58 399.14 L13.41 397.97 L14.39 396.75 L13.87 395.50 L12.31 395.33 L12.31 393.67 L13.87 393.50 L14.39 392.25 L13.41 391.03 L14.58 389.86 L15.80 390.84 L17.05 390.32 L17.22 388.76 L18.88 388.76 L19.05 390.32 L20.30 390.84 L21.52 389.86 L22.69 391.03 L21.71 392.25ZM20.02 394.50 A1.97 1.97 0 1 0 16.08 394.50 A1.97 1.97 0 1 0 20.02 394.50Z" fill="#2c6496" fill-rule="evenodd"/><circle cx="18.5" cy="423.7" r="1.3" fill="#2c6496"/><path d="M15.9 426.1H19.6V431.7H20.8V433.1H15.9V431.7H17.1V427.5H15.9Z" fill="#2c6496"/><path d="M12.7 467.8L18.7 461.8" stroke="#23527c" stroke-width="2.6" stroke-linecap="round"/><path d="M17.7 462.8A3.6 3.6 0 0 1 21.7 456.6L19.799999999999997 458.7L20.2 460.3L21.799999999999997 460.7L23.9 458.8A3.6 3.6 0 0 1 17.7 462.8Z" fill="#23527c"/><path d="M173 459.6L176.55 463.40000000000003L180.1 459.6" stroke="#34546f" stroke-width="1.5" fill="none"/><path d="M180.70000000000002 191.25L176.8 194.4L180.70000000000002 197.55" stroke="#3c5a74" stroke-width="1.4" fill="none"/><path d="M180.70000000000002 257.95000000000005L176.8 261.1L180.70000000000002 264.25" stroke="#3c5a74" stroke-width="1.4" fill="none"/><path d="M180.70000000000002 291.3L176.8 294.45L180.70000000000002 297.59999999999997" stroke="#3c5a74" stroke-width="1.4" fill="none"/><path d="M180.70000000000002 324.65000000000003L176.8 327.8L180.70000000000002 330.95" stroke="#3c5a74" stroke-width="1.4" fill="none"/><path d="M180.70000000000002 358.00000000000006L176.8 361.15000000000003L180.70000000000002 364.3" stroke="#3c5a74" stroke-width="1.4" fill="none"/><path d="M180.70000000000002 391.3500000000001L176.8 394.50000000000006L180.70000000000002 397.65000000000003" stroke="#3c5a74" stroke-width="1.4" fill="none"/><path d="M180.70000000000002 424.70000000000005L176.8 427.85L180.70000000000002 431.0" stroke="#3c5a74" stroke-width="1.4" fill="none"/><circle cx="38.9" cy="814.5" r="2.6" fill="#2c6496"/><path d="M34.5 822.5V820.1Q34.5 817.5 36.9 817.5H40.9Q43.3 817.5 43.3 820.1V822.5Z" fill="#2c6496"/><circle cx="34.5" cy="814.1" r="2" fill="#2c6496"/><circle cx="43.3" cy="814.1" r="2" fill="#2c6496"/><path d="M31.9 820.5V819.0Q31.9 816.7 33.9 816.7H35.3L33.9 820.5Z M45.9 820.5V819.0Q45.9 816.7 43.9 816.7H42.5L43.9 820.5Z" fill="#2c6496"/><circle cx="38.8" cy="850.1" r="4.6" stroke="#2c6496" stroke-width="1.4" fill="none"/><path d="M38.8 852.7V848.9" stroke="#2c6496" stroke-width="1.5"/><path d="M36.4 850.1L38.8 847.3000000000001L41.199999999999996 850.1Z" fill="#2c6496"/><path d="M33.8 876.2H39.8L43.3 879.7V888.2H33.8Z" fill="#2c6496"/><path d="M35.8 882.2H41.3 M35.8 884.2H41.3 M35.8 886.2H41.3" stroke="#f8f8f8" stroke-width="0.8"/><path d="M39.8 876.2V879.7H43.3" fill="#f8f8f8" opacity="0.6"/><path d="M551.5 18.9h5.6v4.4h-5.6Z M558.3 18.9h5.6v4.4h-5.6Z M551.5 24.5h5.6v4.4h-5.6Z M558.3 24.5h5.6v4.4h-5.6Z" fill="#222"/><path d="M675.4 22.2H683.4L679.4 26.2Z" fill="#333"/><path d="M1009.3 17.2L1017.4 31.0H1001.1999999999999Z" fill="#f4a21a" stroke="#f4a21a" stroke-width="2.2" stroke-linejoin="round"/><path d="M1008.0999999999999 21.0H1010.5L1010.1999999999999 26.599999999999998H1008.4Z M1008.1999999999999 28.0h2.2v2.2h-2.2Z" fill="#fff"/><g transform="translate(1058,19.2) scale(1.0)"><rect x="5.1" y="0" width="2.5" height="5" fill="#222"/><path d="M2.6 3.7H10.1L6.35 7.5Z" fill="#222"/><path d="M0 7.5H4.2L6.35 9.4L8.5 7.5H12.6V11.2H0Z" fill="#222"/></g><path d="M1074.7 25.1H1081.6000000000001L1078.15 28.6Z" fill="#333"/><path d="M1110.3 21H1120.3L1116.3 25.2V30.8L1114.3 29V25.2Z" fill="#222"/><path d="M1134.4 25.1H1141.3000000000002L1137.8500000000001 28.6Z" fill="#333"/><g transform="translate(1260.2,18.8)"><path d="M0.6 0V13.4H19.7" stroke="#333" stroke-width="1.3" fill="none"/><path d="M2.2 11.8V5.5L7 1.3L11.3 6.2L15.3 3.5L18.3 11.8Z" fill="#333"/></g><path d="M1340.3 25.2H1347.1L1343.7 28.7Z" fill="#333"/><circle cx="1377.9" cy="25.5" r="5.3" stroke="#222" stroke-width="2.4" fill="none"/><path d="M1381.8000000000002 29.7L1386.5 34.2" stroke="#222" stroke-width="2.5" stroke-linecap="round"/><path d="M1375.1000000000001 25.8H1380.7" stroke="#222" stroke-width="1.5"/><path d="M1377.9 23.0V28.6" stroke="#222" stroke-width="1.5"/><circle cx="1418.4" cy="25.5" r="5.3" stroke="#222" stroke-width="2.4" fill="none"/><path d="M1422.3000000000002 29.7L1427.0 34.2" stroke="#222" stroke-width="2.5" stroke-linecap="round"/><path d="M1415.6000000000001 25.8H1421.2" stroke="#222" stroke-width="1.5"/><path d="M1456.1 20.3h4.4v10.5h-4.4Z M1463.6999999999998 20.3h4.4v10.5h-4.4Z" fill="#222"/><path d="M1516.9 25.3H1523.7L1520.3000000000002 28.8Z" fill="#333"/><circle cx="1557.1499999999999" cy="23.1" r="2.7" fill="#222"/><path d="M1552.3 31.5V28.5Q1552.3 26.1 1554.7 26.1H1559.6Q1562.0 26.1 1562.0 28.5V31.5Z" fill="#222"/><path d="M1566.5 25.3H1573.3L1569.9 28.8Z" fill="#333"/><g transform="translate(1271.9,67.2) scale(1.0)"><rect x="5.1" y="0" width="2.5" height="5" fill="#222"/><path d="M2.6 3.7H10.1L6.35 7.5Z" fill="#222"/><path d="M0 7.5H4.2L6.35 9.4L8.5 7.5H12.6V11.2H0Z" fill="#222"/></g><path d="M1436.8 67.2H1445.8L1443.1 76.8H1435.0Q1434.3999999999999 78.0 1435.3999999999999 78.10000000000001H1443.3999999999999L1445.8 69.4V70.4L1444.0 79.2H1434.8Q1433.3 78.8 1433.8999999999999 76.5Z" fill="#222"/><path d="M1438.3 69.8H1443.1 M1437.8 71.60000000000001H1442.6" stroke="#fff" stroke-width="0.9"/><path d="M565.3 102.6L572.6999999999999 110.8L580.0999999999999 102.6" stroke="#2d6499" stroke-width="1.8" fill="none"/><path d="M541.9 391.6L549.25 398.90000000000003L556.6 391.6" stroke="#2a5f92" stroke-width="1.7" fill="none"/><path d="M409.3 738.4L416.40000000000003 746.0L423.5 738.4" stroke="#2a5f92" stroke-width="1.7" fill="none"/><circle cx="876.5" cy="139.9" r="3.9" stroke="#111" stroke-width="1.9" fill="none"/><path d="M879.5 142.9L882.7 146.1" stroke="#111" stroke-width="2.1" stroke-linecap="round"/><path d="M882 154.5L878.5 158.0M872 164.5L875.5 161.0" stroke="#111" stroke-width="1.9" stroke-linecap="round"/><path d="M877.3 154.7V159.2H881.8Z M876.7 164.3V159.8H872.2Z" fill="#111"/><path d="M871.6 176.6H881.3000000000001L876.45 181.9Z" fill="#333"/><circle cx="1504" cy="491.8" r="3.9" stroke="#111" stroke-width="1.9" fill="none"/><path d="M1507 494.8L1510.2 498.0" stroke="#111" stroke-width="2.1" stroke-linecap="round"/><path d="M1509.7 506.2L1506.2 509.7M1499.7 516.2L1503.2 512.7" stroke="#111" stroke-width="1.9" stroke-linecap="round"/><path d="M1505.0 506.4V510.9H1509.5Z M1504.4 516.0V511.5H1499.9Z" fill="#111"/><path d="M1499 528.3H1509L1504.0 533.5999999999999Z" fill="#333"/><circle cx="1504" cy="603.3" r="3.9" stroke="#111" stroke-width="1.9" fill="none"/><path d="M1507 606.3L1510.2 609.5" stroke="#111" stroke-width="2.1" stroke-linecap="round"/><path d="M1509.7 617.7L1506.2 621.2M1499.7 627.7L1503.2 624.2" stroke="#111" stroke-width="1.9" stroke-linecap="round"/><path d="M1505.0 617.9000000000001V622.4000000000001H1509.5Z M1504.4 627.5V623.0H1499.9Z" fill="#111"/><path d="M1499 639.8H1509L1504.0 645.0999999999999Z" fill="#333"/><g transform="translate(1508.6,184.0) scale(0.95)"><rect x="5.1" y="0" width="2.5" height="5" fill="#222"/><path d="M2.6 3.7H10.1L6.35 7.5Z" fill="#222"/><path d="M0 7.5H4.2L6.35 9.4L8.5 7.5H12.6V11.2H0Z" fill="#222"/></g><g transform="translate(1508.6,232.5) scale(0.95)"><rect x="5.1" y="0" width="2.5" height="5" fill="#222"/><path d="M2.6 3.7H10.1L6.35 7.5Z" fill="#222"/><path d="M0 7.5H4.2L6.35 9.4L8.5 7.5H12.6V11.2H0Z" fill="#222"/></g><g transform="translate(1539.6,492.5) scale(0.95)"><rect x="5.1" y="0" width="2.5" height="5" fill="#222"/><path d="M2.6 3.7H10.1L6.35 7.5Z" fill="#222"/><path d="M0 7.5H4.2L6.35 9.4L8.5 7.5H12.6V11.2H0Z" fill="#222"/></g><g transform="translate(1539.6,604.0) scale(0.95)"><rect x="5.1" y="0" width="2.5" height="5" fill="#222"/><path d="M2.6 3.7H10.1L6.35 7.5Z" fill="#222"/><path d="M0 7.5H4.2L6.35 9.4L8.5 7.5H12.6V11.2H0Z" fill="#222"/></g><g transform="translate(852.2,864.9) scale(0.95)"><rect x="5.1" y="0" width="2.5" height="5" fill="#222"/><path d="M2.6 3.7H10.1L6.35 7.5Z" fill="#222"/><path d="M0 7.5H4.2L6.35 9.4L8.5 7.5H12.6V11.2H0Z" fill="#222"/></g><g transform="translate(1539.1999999999998,864.9) scale(0.95)"><rect x="5.1" y="0" width="2.5" height="5" fill="#222"/><path d="M2.6 3.7H10.1L6.35 7.5Z" fill="#222"/><path d="M0 7.5H4.2L6.35 9.4L8.5 7.5H12.6V11.2H0Z" fill="#222"/></g><path d="M413.5 455.1L416.75 451.5L420.0 455.1Z M413.5 456.9L416.75 460.5L420.0 456.9Z" fill="#bbb"/><path d="M499.6 454L503.20000000000005 457.6L506.8 454Z" fill="#666"/><path d="M586 455.1L589.25 451.5L592.5 455.1Z M586 456.9L589.25 460.5L592.5 456.9Z" fill="#bbb"/><path d="M672.4 455.1L675.65 451.5L678.9 455.1Z M672.4 456.9L675.65 460.5L678.9 456.9Z" fill="#bbb"/><g transform="translate(637.5,780) scale(1.27)"><g transform="translate(0,0)"><path d="M0.6 0V13.4H19.7" stroke="#2f73b3" stroke-width="1.3" fill="none"/><path d="M2.2 11.8V5.5L7 1.3L11.3 6.2L15.3 3.5L18.3 11.8Z" fill="#2f73b3"/></g></g><g transform="translate(1336.2,780) scale(1.27)"><g transform="translate(0,0)"><path d="M0.6 0V13.4H19.7" stroke="#2f73b3" stroke-width="1.3" fill="none"/><path d="M2.2 11.8V5.5L7 1.3L11.3 6.2L15.3 3.5L18.3 11.8Z" fill="#2f73b3"/></g></g></svg>
<svg style="position:absolute;left:0;top:0" width="1600" height="908"><path d="M0 902.5 A5.5 5.5 0 0 0 5.5 908 H0Z M1600 902.5 A5.5 5.5 0 0 1 1594.5 908 H1600Z" fill="#1a1a1a"/></svg>
<div class="t" style="top:24.60px;font-size:10.2px;line-height:10.2px;color:#222;left:1124.60px;-webkit-text-stroke:0.3px #222;">4</div>
<div class="t" style="top:67.40px;font-size:13.5px;line-height:13.5px;font-weight:bold;color:#222;left:1523.00px;">?</div>
</body></html>
